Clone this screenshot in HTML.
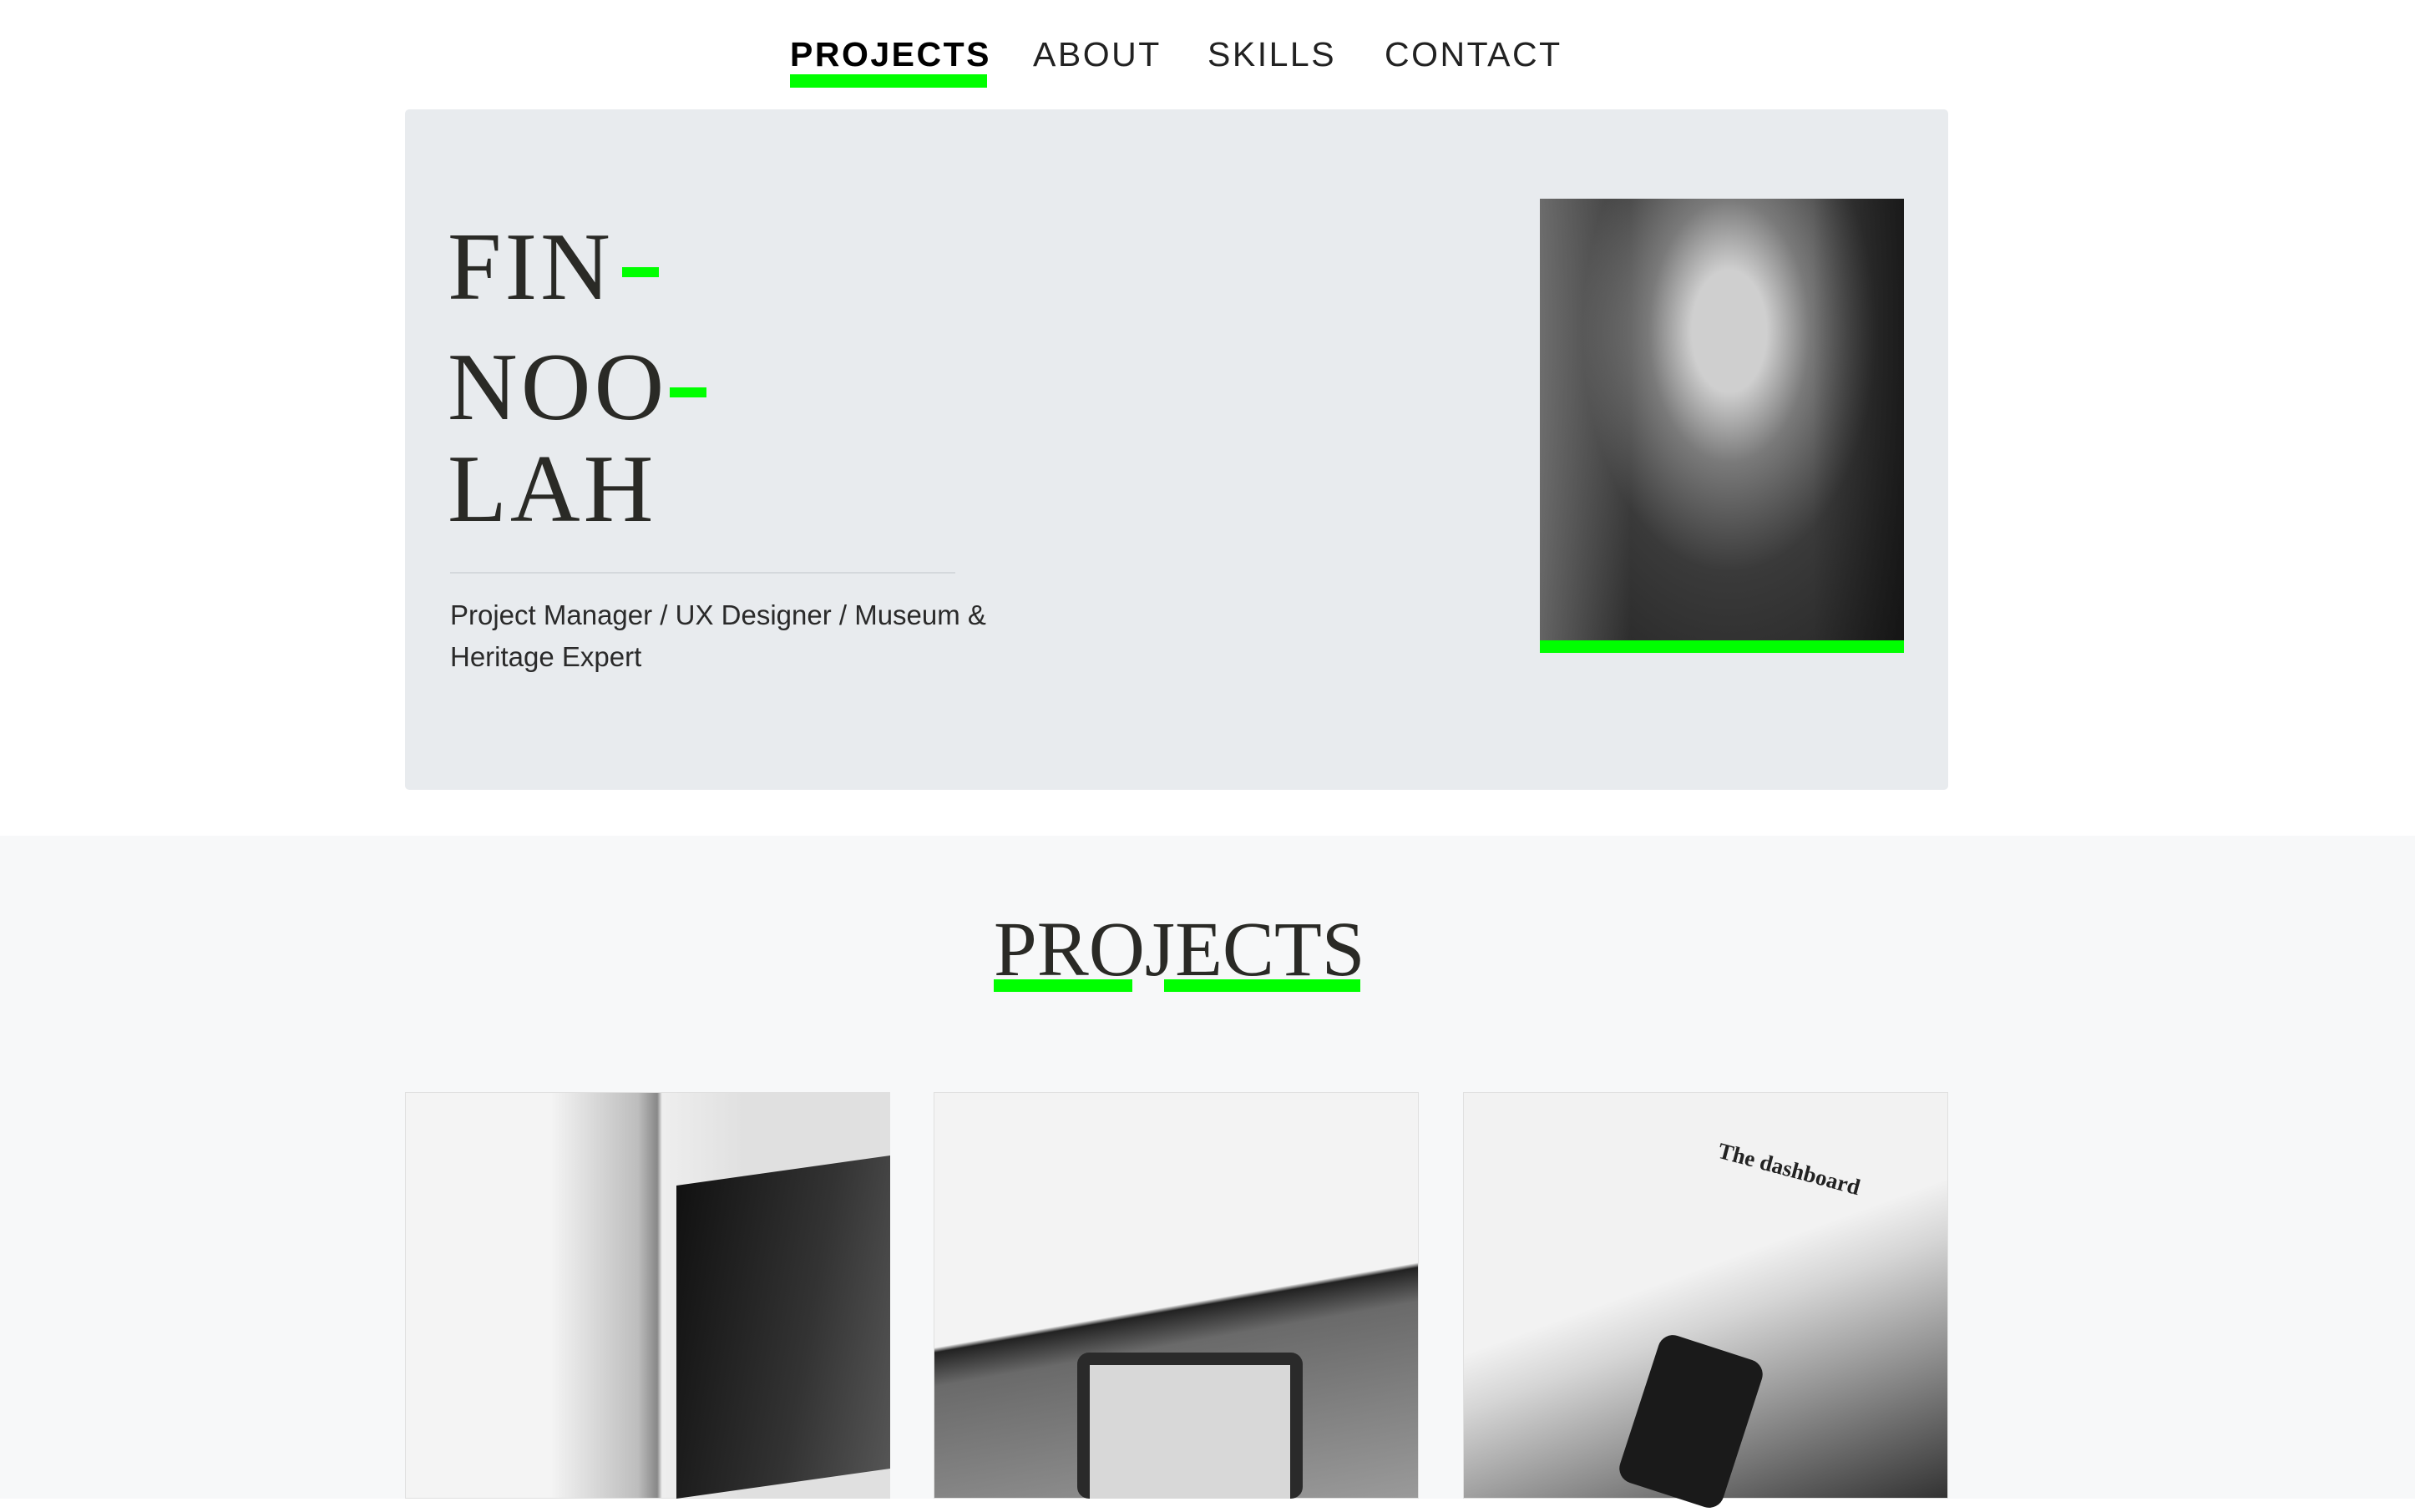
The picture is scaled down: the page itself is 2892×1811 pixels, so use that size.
<!DOCTYPE html>
<html><head><meta charset="utf-8"><style>
*{margin:0;padding:0;box-sizing:border-box}
body{width:2892px;height:1795px;overflow:hidden;background:#fff;font-family:"Liberation Sans",sans-serif;position:relative}
.a{position:absolute}
.nav{font-size:41px;letter-spacing:2.5px;color:#222;top:40px;line-height:50px}
.serif{font-family:"Liberation Serif",serif;color:#2a2a26}
.g{background:#00ff00}
.t{font-size:116px;letter-spacing:4px;line-height:130px}
</style></head><body>
<div class="a nav" style="left:946px;font-weight:bold;color:#000">PROJECTS</div>
<div class="a g" style="left:946px;top:89px;width:236px;height:16px"></div>
<div class="a nav" style="left:1237px">ABOUT</div>
<div class="a nav" style="left:1446px">SKILLS</div>
<div class="a nav" style="left:1658px">CONTACT</div>

<div class="a" style="left:485px;top:131px;width:1848px;height:815px;background:#e8ebee;border-radius:5px"></div>
<div class="a serif t" style="left:536px;top:255px">FIN</div>
<div class="a g" style="left:745px;top:320px;width:44px;height:12px"></div>
<div class="a serif t" style="left:536px;top:399px">NOO</div>
<div class="a g" style="left:802px;top:464px;width:44px;height:12px"></div>
<div class="a serif t" style="left:536px;top:521px">LAH</div>
<div class="a" style="left:539px;top:685px;width:605px;height:2px;background:#d4d8dc"></div>
<div class="a" style="left:539px;top:712px;width:700px;font-size:33px;line-height:50px;color:#2a2a2a">Project Manager / UX Designer / Museum &amp; Heritage Expert</div>

<div class="a" style="left:1844px;top:238px;width:436px;height:529px;background:radial-gradient(ellipse at 52% 30%,#cfcfcf 0 14%,#7a7a7a 30%,#3a3a3a 55%,#222 100%)"></div>
<div class="a" style="left:1844px;top:238px;width:436px;height:529px;background:linear-gradient(90deg,rgba(200,200,200,.4),transparent 25%,transparent 75%,rgba(10,10,10,.6))"></div>
<div class="a g" style="left:1844px;top:767px;width:436px;height:15px"></div>

<div class="a" style="left:0;top:1001px;width:2892px;height:794px;background:#f7f8f9"></div>
<div class="a serif" style="left:1190px;top:1088px;font-size:93px;letter-spacing:0;line-height:100px">PROJECTS</div>
<div class="a g" style="left:1190px;top:1173px;width:166px;height:15px"></div>
<div class="a g" style="left:1394px;top:1173px;width:235px;height:15px"></div>

<div class="a" style="left:485px;top:1308px;width:581px;height:487px;border:1px solid #e0e0e0;background:linear-gradient(90deg,#f4f4f4 0 30%,#bdbdbd 48%,#888 52%,#eee 53%,#e0e0e0 70%)"></div>
<div class="a" style="left:810px;top:1420px;width:256px;height:375px;background:linear-gradient(100deg,#111,#333 60%,#555);transform:skewY(-8deg);transform-origin:left top"></div>
<div class="a" style="left:1118px;top:1308px;width:581px;height:487px;border:1px solid #e0e0e0;background:linear-gradient(170deg,#f3f3f3 0 52%,#222 53%,#6a6a6a 60%,#9a9a9a 100%)"></div>
<div class="a" style="left:1290px;top:1620px;width:270px;height:175px;background:#2a2a2a;border-radius:14px"></div>
<div class="a" style="left:1305px;top:1635px;width:240px;height:160px;background:#d8d8d8"></div>
<div class="a" style="left:1752px;top:1308px;width:581px;height:487px;border:1px solid #e0e0e0;background:linear-gradient(160deg,#f2f2f2 0 45%,#d5d5d5 55%,#7b7b7b 80%,#333 100%)"></div>
<div class="a" style="left:1960px;top:1610px;width:130px;height:185px;background:#1a1a1a;border-radius:18px;transform:rotate(18deg)"></div>
<div class="a serif" style="left:2055px;top:1385px;font-size:27px;font-weight:bold;transform:rotate(15deg);color:#222">The dashboard</div>
</body></html>
